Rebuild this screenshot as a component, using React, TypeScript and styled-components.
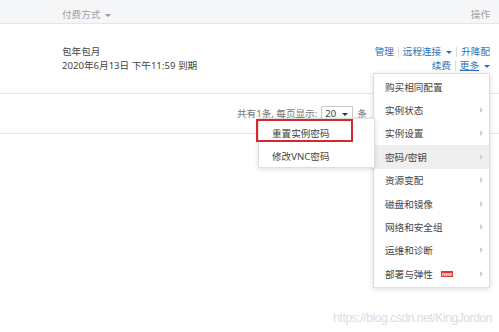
import React from "react";
import styled, { createGlobalStyle } from "styled-components";

const Global = createGlobalStyle`
  html, body { margin: 0; padding: 0; background: #fff; }
  body {
    font-family: "Noto Sans", "Noto Sans CJK SC", sans-serif;
    font-size: 9.6px;
    color: #444;
  }
`;

const Page = styled.div`
  position: relative;
  width: 499px;
  height: 332px;
  overflow: hidden;
  display: flex;
  flex-direction: column;
`;

const HeaderRow = styled.div`
  box-sizing: border-box;
  height: 24px;
  padding: 7px 9px 0 62px;
  display: flex;
  justify-content: space-between;
  background: #f5f6f8;
  border-bottom: 1px solid #e4e6ea;
  line-height: 14px;
  color: #a0a0a0;
`;

const HeadCell = styled.div`
  display: flex;
  align-items: center;
  gap: 5px;
`;

const Caret = styled.span<{ $color?: string }>`
  display: inline-block;
  width: 0;
  height: 0;
  border-left: 3px solid transparent;
  border-right: 3px solid transparent;
  border-top: 3px solid ${(p) => p.$color || "#999"};
  margin-top: 1px;
`;

const DataRow = styled.div`
  box-sizing: border-box;
  height: 70px;
  padding: 0 9px 0 62px;
  display: flex;
  align-items: center;
  justify-content: space-between;
  border-bottom: 1px solid #e6e6e6;
  line-height: 14px;
`;

const Billing = styled.div`
  display: flex;
  flex-direction: column;
`;

const Actions = styled.div`
  display: flex;
  flex-direction: column;
  align-items: flex-end;
`;

const ActionLine = styled.div`
  display: flex;
  align-items: center;
`;

const Link = styled.span`
  color: #2a72bd;
  display: inline-flex;
  align-items: center;
  gap: 5px;
`;

const Under = styled.span`
  text-decoration: underline;
`;

const Sep = styled.span`
  display: inline-block;
  width: 1px;
  height: 10px;
  background: #dcdcdc;
  margin: 0 4px;
`;

const Pager = styled.div`
  box-sizing: border-box;
  height: 40px;
  padding-left: 237px;
  display: flex;
  align-items: center;
  border-bottom: 1px solid #e6e6e6;
  color: #777;
  line-height: 14px;
`;

const Select = styled.span`
  box-sizing: border-box;
  display: inline-flex;
  align-items: center;
  justify-content: space-between;
  width: 32px;
  height: 16px;
  margin: 0 4px 0 4px;
  padding: 0 4px 0 3px;
  border: 1px solid #c8c8c8;
  color: #444;
`;

const Filler = styled.div`
  flex: 1;
`;

const Watermark = styled.div`
  display: flex;
  justify-content: flex-end;
  padding: 0 7px 7px 0;
  font-family: "Liberation Sans", Arial, sans-serif;
  font-size: 12px;
  letter-spacing: -0.4px;
  color: #dcdcdc;
  line-height: 14px;
`;

const Menu = styled.div`
  position: absolute;
  box-sizing: border-box;
  background: #fff;
  border: 1px solid #dedede;
  box-shadow: 0 1px 5px rgba(0, 0, 0, 0.15);
  padding: 1px 0;
`;

const MainMenu = styled(Menu)`
  left: 373px;
  top: 73px;
  width: 117px;
  height: 215px;
`;

const SubMenu = styled(Menu)`
  left: 258px;
  top: 118px;
  width: 117px;
  height: 50px;
  padding-top: 2px;
`;

const Item = styled.div<{ $active?: boolean; $pad?: number; $h?: number }>`
  height: ${(p) => p.$h || 23.4}px;
  display: flex;
  align-items: center;
  justify-content: space-between;
  padding: 0 6px 0 ${(p) => p.$pad || 11}px;
  background: ${(p) => (p.$active ? "#efefef" : "transparent")};
  color: #444;
`;

const Label = styled.span`
  display: inline-flex;
  align-items: center;
  gap: 8px;
`;

const Arrow = styled.span`
  width: 0;
  height: 0;
  border-top: 3px solid transparent;
  border-bottom: 3px solid transparent;
  border-left: 3px solid #d0d0d0;
`;

const NewBadge = styled.span`
  display: inline-flex;
  align-items: center;
  justify-content: center;
  width: 12px;
  height: 6px;
  background: #e0363a;
  color: #fff;
  font-family: "Liberation Sans", Arial, sans-serif;
  font-size: 5px;
  line-height: 6px;
  font-weight: bold;
  overflow: hidden;
`;

const Annotation = styled.div`
  position: absolute;
  left: 256px;
  top: 119px;
  width: 97px;
  height: 23px;
  box-sizing: border-box;
  border: 2px solid #d7282f;
`;

const menuItems = [
  { label: "购买相同配置", arrow: false },
  { label: "实例状态", arrow: true },
  { label: "实例设置", arrow: true },
  { label: "密码/密钥", arrow: true, active: true },
  { label: "资源变配", arrow: true },
  { label: "磁盘和镜像", arrow: true },
  { label: "网络和安全组", arrow: true },
  { label: "运维和诊断", arrow: true },
  { label: "部署与弹性", arrow: true, badge: true },
];

export default function App() {
  return (
    <>
      <Global />
      <Page>
        <HeaderRow>
          <HeadCell>
            付费方式 <Caret />
          </HeadCell>
          <HeadCell>操作</HeadCell>
        </HeaderRow>
        <DataRow>
          <Billing>
            <div>包年包月</div>
            <div>2020年6月13日 下午11:59 到期</div>
          </Billing>
          <Actions>
            <ActionLine>
              <Link>管理</Link>
              <Sep />
              <Link>
                远程连接 <Caret $color="#2a72bd" />
              </Link>
              <Sep />
              <Link>升降配</Link>
            </ActionLine>
            <ActionLine>
              <Link>续费</Link>
              <Sep />
              <Link>
                <Under>更多</Under> <Caret $color="#2a72bd" />
              </Link>
            </ActionLine>
          </Actions>
        </DataRow>
        <Pager>
          共有1条, 每页显示:
          <Select>
            20 <Caret $color="#333" />
          </Select>
          条
        </Pager>
        <Filler />
        <Watermark>https://blog.csdn.net/KingJordon</Watermark>

        <MainMenu>
          {menuItems.map((m) => (
            <Item key={m.label} $active={m.active}>
              <Label>
                {m.label}
                {m.badge && <NewBadge>new</NewBadge>}
              </Label>
              {m.arrow && <Arrow />}
            </Item>
          ))}
        </MainMenu>
        <SubMenu>
          <Item $pad={13} $h={23}>重置实例密码</Item>
          <Item $pad={13} $h={23}>修改VNC密码</Item>
        </SubMenu>
        <Annotation />
      </Page>
    </>
  );
}
